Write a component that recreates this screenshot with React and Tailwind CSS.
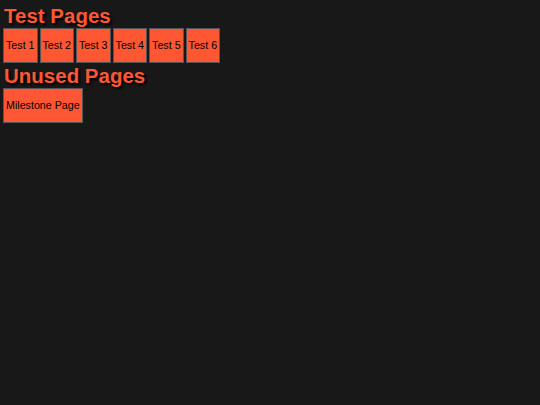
export default function App() {
  const tests = ['Test 1', 'Test 2', 'Test 3', 'Test 4', 'Test 5', 'Test 6'];

  return (
    <div className="min-h-screen bg-[#181818] p-[3px] font-['Liberation_Sans',Arial,sans-serif]">
      <h2 className="my-[1px] pl-[1px] text-[20.5px] leading-[23px] font-bold text-[#ff5733] [text-shadow:2px_2px_2px_#000]">
        Test Pages
      </h2>
      <div className="flex gap-[2px]">
        {tests.map((t) => (
          <button
            key={t}
            className="border border-[#555] bg-[#ff5733] px-[2px] py-[10px] text-[10.7px] leading-[13px] text-black"
          >
            {t}
          </button>
        ))}
      </div>
      <h2 className="my-[1px] pl-[1px] text-[20.5px] leading-[23px] font-bold text-[#ff5733] [text-shadow:2px_2px_2px_#000]">
        Unused Pages
      </h2>
      <div className="flex gap-[2px]">
        <button className="border border-[#555] bg-[#ff5733] px-[2px] py-[10px] text-[10.7px] leading-[13px] text-black">
          Milestone Page
        </button>
      </div>
    </div>
  );
}
